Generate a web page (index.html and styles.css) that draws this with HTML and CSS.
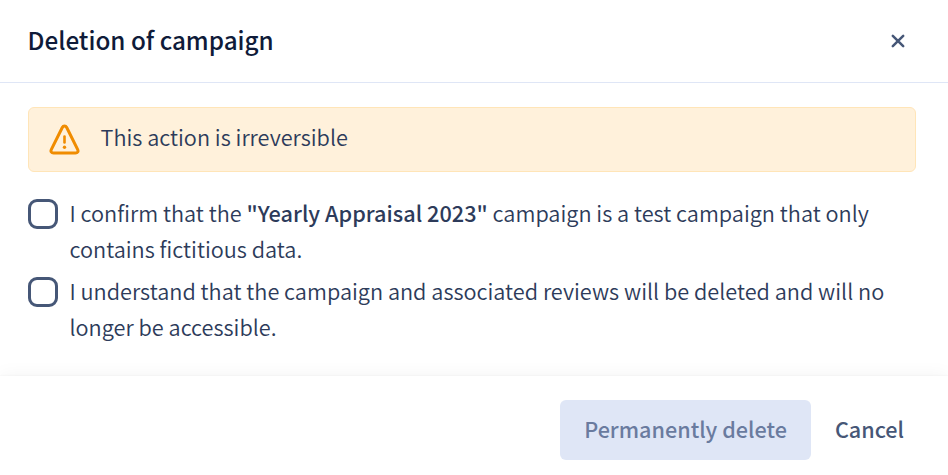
FILE: index.html
```html
<!DOCTYPE html>
<html lang="en">
<head>
    <meta charset="UTF-8">
    <meta name="viewport" content="width=device-width, initial-scale=1.0">
    <title>Deletion of campaign</title>
    <link rel="stylesheet" href="styles.css">
</head>
<body>
    <div class="dialog">
        <header class="dialog-header">
            <h1>Deletion of campaign</h1>
            <button class="close-button" aria-label="Close">
                <svg width="14" height="14" viewBox="0 0 14 14">
                    <path d="M1.8 1.8L12.2 12.2M12.2 1.8L1.8 12.2"/>
                </svg>
            </button>
        </header>
        <main class="dialog-content">
            <div class="callout">
                <svg class="callout-icon" width="32" height="32" viewBox="0 0 32 32">
                    <path class="triangle" d="M13.3 3.5L2.4 25.3C1.3 27.5 2.5 29 4.5 29H26.5C28.5 29 29.7 27.5 28.6 25.3L17.7 3.5C16.7 1.5 14.3 1.5 13.3 3.5Z"/>
                    <path class="bar" d="M15.5 12.5V18.5"/>
                    <circle cx="15.5" cy="23.2" r="1.7"/>
                </svg>
                <span>This action is irreversible</span>
            </div>
            <label class="checkbox-field">
                <input type="checkbox">
                <span>I confirm that the <b>"Yearly Appraisal 2023"</b> campaign is a test campaign that only contains fictitious data.</span>
            </label>
            <label class="checkbox-field">
                <input type="checkbox">
                <span>I understand that the campaign and associated reviews will be deleted and will no longer be accessible.</span>
            </label>
        </main>
        <footer class="dialog-footer">
            <button class="button" disabled>Permanently delete</button>
            <button class="button button-text">Cancel</button>
        </footer>
    </div>
</body>
</html>
```
FILE: styles.css
```css
* {
    box-sizing: border-box;
}

body {
    margin: 0;
    font-family: "Noto Sans CJK SC", "Noto Sans", sans-serif;
    font-size: 21.7px;
    font-weight: 350;
    line-height: 36px;
    color: #2d3b5a;
    background: #fff;
}

.dialog {
    display: flex;
    flex-direction: column;
    height: 475px;
    overflow: hidden;
}

.dialog-header {
    display: flex;
    align-items: center;
    justify-content: space-between;
    height: 83px;
    padding: 0 43.5px 0 27.5px;
    border-bottom: 1px solid #dfe6f6;
}

.dialog-header h1 {
    margin: 0;
    padding-bottom: 2px;
    font-size: 24.25px;
    font-weight: 500;
    color: #0f1b39;
}

.close-button {
    display: flex;
    padding: 0 0 1px;
    border: none;
    background: none;
    cursor: pointer;
}

.close-button path {
    stroke: #465777;
    stroke-width: 2.5;
    stroke-linecap: round;
}

.dialog-content {
    flex: 1;
    padding: 24px 32px 0 28px;
}

.callout {
    display: flex;
    align-items: center;
    gap: 19.5px;
    height: 65px;
    margin-bottom: 23px;
    padding: 0 20px;
    border: 1px solid #ffe5b8;
    border-radius: 6px;
    background: #fff1db;
}

.callout span {
    padding-bottom: 6px;
}

.callout-icon {
    fill: #f08c00;
    stroke: #f08c00;
    stroke-width: 0;
}

.callout-icon .triangle {
    fill: none;
    stroke-width: 3;
}

.callout-icon .bar {
    stroke-width: 2.6;
    stroke-linecap: round;
}

.checkbox-field {
    display: flex;
    gap: 11.5px;
    margin-bottom: 6px;
}

.checkbox-field b {
    font-weight: 500;
}

.checkbox-field input {
    appearance: none;
    flex: none;
    width: 30px;
    height: 30px;
    margin: 4px 0 0;
    border: 3px solid #465777;
    border-radius: 9px;
}

.dialog-footer {
    display: flex;
    justify-content: flex-end;
    height: 99px;
    padding: 24px 20px 0 0;
    background: #fff;
    box-shadow: 0 0 2px rgba(0, 0, 0, 0.06), 0 0 18px rgba(0, 0, 0, 0.05);
}

.button {
    height: 60px;
    padding: 0 24px 2px;
    border: none;
    border-radius: 6px;
    font: inherit;
    font-size: 21.6px;
    font-weight: 500;
    color: #6a7b9f;
    background: #dfe6f6;
}

.button-text {
    color: #465777;
    background: none;
    cursor: pointer;
}
```
